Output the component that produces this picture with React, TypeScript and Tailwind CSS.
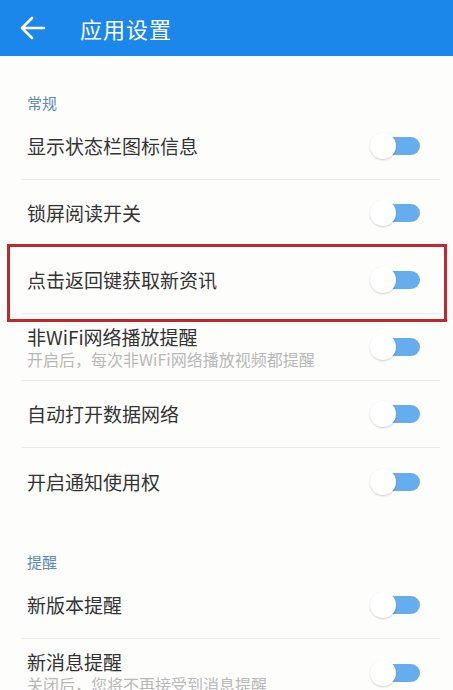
import React from 'react';

type Item = { title: string; sub?: string; highlight?: boolean };

const general: Item[] = [
  { title: '显示状态栏图标信息' },
  { title: '锁屏阅读开关' },
  { title: '点击返回键获取新资讯', highlight: true },
  { title: '非WiFi网络播放提醒', sub: '开启后，每次非WiFi网络播放视频都提醒' },
  { title: '自动打开数据网络' },
  { title: '开启通知使用权' },
];

const reminders: Item[] = [
  { title: '新版本提醒' },
  { title: '新消息提醒', sub: '关闭后，您将不再接受到消息提醒' },
];

function Toggle() {
  return (
    <div className="relative w-[50px] h-[26px] flex items-center">
      <div className="absolute left-[4px] right-0 h-[18px] rounded-full bg-[#66adee]" />
      <div className="absolute left-0 w-[26px] h-[26px] rounded-full bg-white shadow-[0_1px_2px_rgba(0,0,0,0.18)]" />
    </div>
  );
}

function Row({ item, last }: { item: Item; last: boolean }) {
  return (
    <div className="relative">
      {item.highlight && (
        <div className="absolute left-[7px] right-[6px] -top-[3px] -bottom-[8px] border-[3px] border-[#c3262c] pointer-events-none" />
      )}
      <div
        className={`mx-[22px] mr-[13px] h-[67px] flex items-center justify-between pl-[5px] pr-[20px] ${
          last ? '' : 'border-b border-[#ebebeb]'
        }`}
      >
        <div className="flex flex-col">
          <span className="text-[19px] leading-[24px] text-[#333]">{item.title}</span>
          {item.sub && (
            <span className="text-[16px] leading-[21px] text-[#b8b8b8]">{item.sub}</span>
          )}
        </div>
        <Toggle />
      </div>
    </div>
  );
}

function Section({ label, items }: { label: string; items: Item[] }) {
  return (
    <div>
      <div className="h-[57px] pt-[37px] pl-[27px] text-[15px] leading-[20px] text-[#5a8ab6]">{label}</div>
      {items.map((it, i) => (
        <Row key={it.title} item={it} last={i === items.length - 1} />
      ))}
    </div>
  );
}

export default function App() {
  return (
    <div
      className="w-[453px] h-[690px] overflow-hidden bg-[#fdfdfc]"
      style={{ fontFamily: '"Noto Sans CJK SC", "Noto Sans", sans-serif' }}
    >
      <div className="h-[56px] bg-[#1c87eb] flex items-center">
        <svg className="ml-[20px]" width="26" height="24" viewBox="0 0 26 24" fill="none" stroke="#fff" strokeWidth="2.6" strokeLinecap="round" strokeLinejoin="round">
          <path d="M2 12h22M12 2L2 12l10 10" />
        </svg>
        <span className="ml-[34px] text-[22px] text-white tracking-[1px]">应用设置</span>
      </div>
      <Section label="常规" items={general} />
      <Section label="提醒" items={reminders} />
    </div>
  );
}
